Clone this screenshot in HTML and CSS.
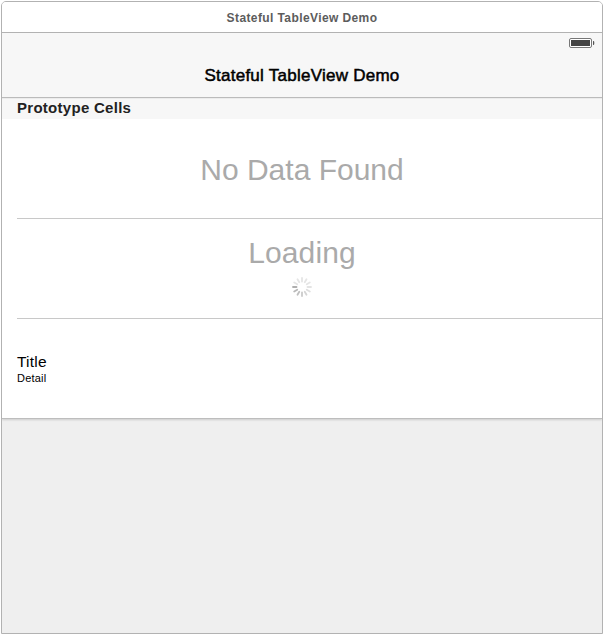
FILE: index.html
```html
<!DOCTYPE html>
<html lang="en">
<head>
<meta charset="utf-8">
<title>Stateful TableView Demo</title>
<link rel="stylesheet" href="styles.css">
</head>
<body>
<main class="scene">
  <header class="scene-title"><span>Stateful TableView Demo</span></header>
  <div class="navbar">
    <div class="status">
      <svg class="battery" width="26" height="10" viewBox="0 0 26 10">
        <rect x=".5" y=".5" width="22" height="9" rx="1.5" fill="#fff" stroke="#777"/>
        <rect x="2" y="2" width="19" height="6" fill="#444"/>
        <path d="M24 3h.5q.8 0 .8 2t-.8 2H24z" fill="#555"/>
      </svg>
    </div>
    <h1 class="nav-title">Stateful TableView Demo</h1>
  </div>
  <section class="table">
    <h2 class="section-title">Prototype Cells</h2>
    <div class="cell empty"><p class="message">No Data Found</p></div>
    <div class="cell loading">
      <p class="message">Loading</p>
      <svg class="spinner" width="20" height="20" viewBox="-10 -10 20 20" stroke-width="1.8" stroke-linecap="round">
        <path d="M0-5.5V-9" stroke="#e5e5e5"/>
        <path d="M0-5.5V-9" stroke="#e5e5e5" transform="rotate(30)"/>
        <path d="M0-5.5V-9" stroke="#e5e5e5" transform="rotate(60)"/>
        <path d="M0-5.5V-9" stroke="#e3e3e3" transform="rotate(90)"/>
        <path d="M0-5.5V-9" stroke="#dedede" transform="rotate(120)"/>
        <path d="M0-5.5V-9" stroke="#d5d5d5" transform="rotate(150)"/>
        <path d="M0-5.5V-9" stroke="#cacaca" transform="rotate(180)"/>
        <path d="M0-5.5V-9" stroke="#bfbfbf" transform="rotate(210)"/>
        <path d="M0-5.5V-9" stroke="#b8b8b8" transform="rotate(240)"/>
        <path d="M0-5.5V-9" stroke="#afafaf" transform="rotate(270)"/>
        <path d="M0-5.5V-9" stroke="#e5e5e5" transform="rotate(300)"/>
        <path d="M0-5.5V-9" stroke="#e5e5e5" transform="rotate(330)"/>
      </svg>
    </div>
    <div class="cell item">
      <p class="item-title">Title</p>
      <p class="item-detail">Detail</p>
    </div>
  </section>
</main>
</body>
</html>
```
FILE: styles.css
```css
* { box-sizing: border-box; }
body {
  margin: 0;
  padding: 1px;
  background: #fff;
  font-family: "Liberation Sans", Arial, sans-serif;
}
h1, h2, p { margin: 0; }
.scene {
  width: 602px;
  height: 633px;
  border: 1px solid #b2b2b2;
  border-radius: 5px 5px 0 0;
  background: #efefef;
  overflow: hidden;
}
.scene-title {
  height: 31px;
  border-bottom: 1px solid #b2b2b2;
  background: #fff;
  color: #5c5c5c;
  font-size: 12px;
  font-weight: bold;
  line-height: 32px;
  letter-spacing: .4px;
  text-align: center;
}
.navbar {
  height: 65px;
  border-bottom: 1px solid #bdbdbd;
  background: #f7f7f7;
}
.status {
  display: flex;
  justify-content: flex-end;
  height: 20px;
  padding: 5px 7px 0 0;
}
.nav-title {
  color: #000;
  font-size: 17px;
  font-weight: normal;
  -webkit-text-stroke: .5px #000;
  line-height: 45px;
  letter-spacing: .25px;
  text-align: center;
}
.table {
  background: #fff;
  border-bottom: 1px solid #bdbdbd;
  box-shadow: 0 1px 2px rgba(0, 0, 0, .15);
}
.section-title {
  height: 21px;
  padding-left: 15px;
  background: #f7f7f7;
  box-shadow: inset 0 1px 0 #ececec;
  color: #222;
  font-size: 15px;
  font-weight: bold;
  line-height: 20px;
  letter-spacing: .28px;
}
.cell {
  display: flex;
  flex-direction: column;
  height: 100px;
  margin-left: 15px;
  border-bottom: 1px solid #c8c8c8;
}
.empty, .loading {
  align-items: center;
  padding-right: 15px;
}
.message {
  color: #aaa;
  font-size: 30px;
  line-height: 34px;
}
.empty { padding-top: 34px; }
.loading { padding-top: 17px; }
.loading .message { letter-spacing: .1px; }
.spinner { margin-top: 7px; }
.item {
  height: 99px;
  padding-top: 34px;
  border-bottom: 0;
}
.item-title {
  color: #000;
  font-size: 15.5px;
  line-height: 17px;
  letter-spacing: .2px;
}
.item-detail {
  margin-top: 1px;
  color: #000;
  font-size: 11px;
  line-height: 15px;
  letter-spacing: .2px;
}
```
